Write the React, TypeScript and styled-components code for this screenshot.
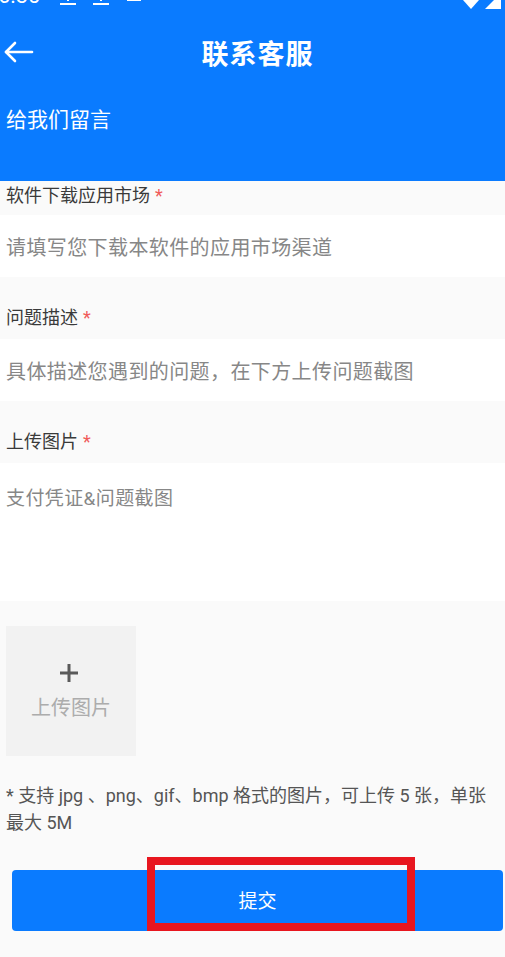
import styled, { createGlobalStyle } from 'styled-components'

const GlobalStyle = createGlobalStyle`
    html, body {
        margin: 0;
        padding: 0;
        background: #fafafa;
    }
    body {
        font-family: Roboto, "Noto Sans CJK SC", "Noto Sans", sans-serif;
    }
`

const BLUE = '#0a7bff'

const Page = styled.div`
    width: 505px;
    min-height: 957px;
    background: #fafafa;
    display: flex;
    flex-direction: column;
`

const Header = styled.header`
    background: ${BLUE};
    color: #fff;
    display: flex;
    flex-direction: column;
`

const StatusBar = styled.div`
    height: 9px;
    overflow: hidden;
    display: flex;
    align-items: flex-end;
    justify-content: space-between;
    padding: 0 4px 0 0;
`

const StatusLeft = styled.div`
    display: flex;
    align-items: flex-end;
    gap: 20px;
    font-family: Roboto, sans-serif;
    font-size: 22px;
    line-height: 22px;
    margin-bottom: 2px;
    span {
        margin-left: -2px;
    }
`

const StatusRight = styled.div`
    display: flex;
    align-items: flex-end;
    gap: 6px;
`

const NavBar = styled.div`
    height: 86px;
    display: grid;
    grid-template-columns: 60px 1fr 60px;
    align-items: center;
`

const BackButton = styled.button`
    background: none;
    border: none;
    padding: 0 0 0 3px;
    display: flex;
    align-items: center;
    cursor: pointer;
`

const Title = styled.h1`
    margin: 0 0 0 10px;
    text-align: center;
    font-size: 27px;
    font-weight: 700;
    letter-spacing: 1px;
`

const Subtitle = styled.div`
    padding: 13px 6px 49px;
    font-size: 21px;
    line-height: 24px;
`

const LabelRow = styled.div<{ $short?: boolean }>`
    height: ${({ $short }) => ($short ? '34px' : '62px')};
    background: #fafafa;
    display: flex;
    align-items: flex-end;
    padding: 0 6px ${({ $short }) => ($short ? '9px' : '11px')};
    box-sizing: border-box;
    font-size: 18px;
    line-height: 20px;
    color: #3a3a3a;
`

const Required = styled.span`
    color: #f05a5a;
    margin-left: 5px;
`

const InputRow = styled.div<{ $tall?: boolean }>`
    background: #fff;
    height: ${({ $tall }) => ($tall ? '138px' : '62px')};
    display: flex;
    align-items: ${({ $tall }) => ($tall ? 'flex-start' : 'center')};
    padding: ${({ $tall }) => ($tall ? '20px 6px 0' : '0 6px')};
    box-sizing: border-box;
    font-size: ${({ $tall }) => ($tall ? '19px' : '20px')};
    letter-spacing: 0.4px;
    color: #878787;
`

const UploadArea = styled.div`
    padding: 25px 6px 0;
`

const UploadBox = styled.div`
    width: 130px;
    height: 130px;
    background: #f2f2f2;
    display: flex;
    flex-direction: column;
    align-items: center;
    justify-content: center;
    gap: 13px;
    color: #acacac;
    font-size: 20px;
    line-height: 24px;
    svg {
        margin-left: -4px;
    }
`

const Note = styled.p`
    margin: 26px 0 0;
    padding: 0 6px;
    font-size: 18px;
    line-height: 27px;
    color: #555;
`

const ButtonWrap = styled.div`
    position: relative;
    margin: 34px 2px 0 12px;
`

const SubmitButton = styled.button`
    width: 100%;
    height: 61px;
    border: none;
    border-radius: 4px;
    background: ${BLUE};
    color: #fff;
    font-family: "Noto Sans CJK SC", sans-serif;
    font-size: 19px;
    padding-bottom: 4px;
`

const Highlight = styled.div`
    position: absolute;
    left: 135px;
    top: -13px;
    width: 268px;
    height: 74px;
    border: 8px solid #e8161f;
    box-sizing: border-box;
    pointer-events: none;
`

const fields = [
    { label: '软件下载应用市场', placeholder: '请填写您下载本软件的应用市场渠道' },
    { label: '问题描述', placeholder: '具体描述您遇到的问题，在下方上传问题截图' },
]

export default function App() {
    return (
        <>
            <GlobalStyle />
            <Page>
                <Header>
                    <StatusBar>
                        <StatusLeft>
                            <span>6:30</span>
                            <svg width="84" height="12" viewBox="0 0 84 12">
                                <rect x="0" y="8" width="16" height="2" fill="#fff" />
                                <rect x="7" y="0" width="2" height="6" fill="#fff" />
                                <rect x="33" y="8" width="16" height="2" fill="#fff" />
                                <rect x="40" y="0" width="2" height="6" fill="#fff" />
                                <rect x="67" y="0" width="14" height="6" fill="#fff" />
                                <rect x="71" y="2" width="9" height="2" fill="#f3a7a7" />
                            </svg>
                        </StatusLeft>
                        <StatusRight>
                            <svg width="16" height="9" viewBox="0 0 16 9">
                                <path d="M0 0 H16 L8 9 Z" fill="#fff" />
                            </svg>
                            <svg width="16" height="9" viewBox="0 0 16 9">
                                <path d="M16 0 V9 H0 L9 0 Z" fill="#fff" />
                            </svg>
                        </StatusRight>
                    </StatusBar>
                    <NavBar>
                        <BackButton aria-label="返回">
                            <svg width="32" height="24" viewBox="0 0 32 24" fill="none" stroke="#fff" strokeWidth="2.6" strokeLinecap="round" strokeLinejoin="round">
                                <path d="M29 12 H3" />
                                <path d="M12 3 L3 12 L12 21" />
                            </svg>
                        </BackButton>
                        <Title>联系客服</Title>
                        <span />
                    </NavBar>
                    <Subtitle>给我们留言</Subtitle>
                </Header>

                {fields.map((f, i) => (
                    <div key={f.label}>
                        <LabelRow $short={i === 0}>
                            {f.label}
                            <Required>*</Required>
                        </LabelRow>
                        <InputRow>{f.placeholder}</InputRow>
                    </div>
                ))}

                <LabelRow>
                    上传图片
                    <Required>*</Required>
                </LabelRow>
                <InputRow $tall>支付凭证&amp;问题截图</InputRow>

                <UploadArea>
                    <UploadBox>
                        <svg width="20" height="20" viewBox="0 0 20 20" stroke="#5a5a5a" strokeWidth="3">
                            <path d="M10 1 V19 M1 10 H19" />
                        </svg>
                        上传图片
                    </UploadBox>
                </UploadArea>

                <Note>* 支持 jpg 、png、gif、bmp 格式的图片，可上传 5 张，单张最大 5M</Note>

                <ButtonWrap>
                    <SubmitButton>提交</SubmitButton>
                    <Highlight />
                </ButtonWrap>
            </Page>
        </>
    )
}
